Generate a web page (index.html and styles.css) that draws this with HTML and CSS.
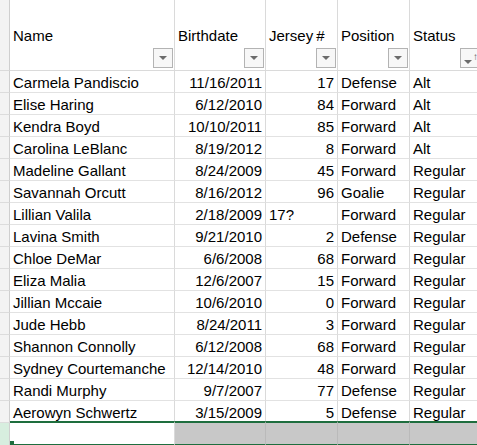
FILE: index.html
```html
<!DOCTYPE html>
<html>
<head>
<meta charset="utf-8">
<link rel="stylesheet" href="styles.css">
</head>
<body>
<div class="sheet">
  <div class="gut hdr"></div>
  <div class="c hdr"><span class="ht">Name</span><span class="fb"><i class="tri"></i></span></div>
  <div class="c hdr"><span class="ht">Birthdate</span><span class="fb"><i class="tri"></i></span></div>
  <div class="c hdr"><span class="ht">Jersey&#8201;#</span><span class="fb"><i class="tri"></i></span></div>
  <div class="c hdr"><span class="ht">Position</span><span class="fb"><i class="tri"></i></span></div>
  <div class="c hdr last"><span class="ht">Status</span><span class="fb sort"><i class="tri"></i><span class="up">↑</span></span></div>

  <div class="gut"></div><div class="c">Carmela Pandiscio</div><div class="c r">11/16/2011</div><div class="c r">17</div><div class="c">Defense</div><div class="c last">Alt</div>
  <div class="gut"></div><div class="c">Elise Haring</div><div class="c r">6/12/2010</div><div class="c r">84</div><div class="c">Forward</div><div class="c last">Alt</div>
  <div class="gut"></div><div class="c">Kendra Boyd</div><div class="c r">10/10/2011</div><div class="c r">85</div><div class="c">Forward</div><div class="c last">Alt</div>
  <div class="gut"></div><div class="c">Carolina LeBlanc</div><div class="c r">8/19/2012</div><div class="c r">8</div><div class="c">Forward</div><div class="c last">Alt</div>
  <div class="gut"></div><div class="c">Madeline Gallant</div><div class="c r">8/24/2009</div><div class="c r">45</div><div class="c">Forward</div><div class="c last">Regular</div>
  <div class="gut"></div><div class="c">Savannah Orcutt</div><div class="c r">8/16/2012</div><div class="c r">96</div><div class="c">Goalie</div><div class="c last">Regular</div>
  <div class="gut"></div><div class="c">Lillian Valila</div><div class="c r">2/18/2009</div><div class="c">17?</div><div class="c">Forward</div><div class="c last">Regular</div>
  <div class="gut"></div><div class="c">Lavina Smith</div><div class="c r">9/21/2010</div><div class="c r">2</div><div class="c">Defense</div><div class="c last">Regular</div>
  <div class="gut"></div><div class="c">Chloe DeMar</div><div class="c r">6/6/2008</div><div class="c r">68</div><div class="c">Forward</div><div class="c last">Regular</div>
  <div class="gut"></div><div class="c">Eliza Malia</div><div class="c r">12/6/2007</div><div class="c r">15</div><div class="c">Forward</div><div class="c last">Regular</div>
  <div class="gut"></div><div class="c">Jillian Mccaie</div><div class="c r">10/6/2010</div><div class="c r">0</div><div class="c">Forward</div><div class="c last">Regular</div>
  <div class="gut"></div><div class="c">Jude Hebb</div><div class="c r">8/24/2011</div><div class="c r">3</div><div class="c">Forward</div><div class="c last">Regular</div>
  <div class="gut"></div><div class="c">Shannon Connolly</div><div class="c r">6/12/2008</div><div class="c r">68</div><div class="c">Forward</div><div class="c last">Regular</div>
  <div class="gut"></div><div class="c">Sydney Courtemanche</div><div class="c r">12/14/2010</div><div class="c r">48</div><div class="c">Forward</div><div class="c last">Regular</div>
  <div class="gut"></div><div class="c">Randi Murphy</div><div class="c r">9/7/2007</div><div class="c r">77</div><div class="c">Defense</div><div class="c last">Regular</div>
  <div class="gut"></div><div class="c">Aerowyn Schwertz</div><div class="c r">3/15/2009</div><div class="c r">5</div><div class="c">Defense</div><div class="c last">Regular</div>

  <div class="gut selg"></div><div class="c sel"></div><div class="c sel gray"></div><div class="c sel gray"></div><div class="c sel gray"></div><div class="c sel gray last"></div>
  <span class="handle"></span>
</div>
</body>
</html>
```
FILE: styles.css
```css
* { box-sizing: border-box; }
html, body { margin: 0; padding: 0; background: #fff; }
body { width: 477px; height: 445px; overflow: hidden; font-family: "Liberation Sans", Arial, sans-serif; font-size: 15px; color: #000; }
.sheet {
  position: relative;
  display: grid;
  grid-template-columns: 10px 165px 91px 72px 72px 80px;
  grid-template-rows: 71px repeat(16, 22px) 23px;
  width: 490px;
}
.gut { background: #f3f3f3; border-right: 1px solid #cfcfcf; border-bottom: 1px solid #dcdcdc; }
.c { border-right: 1px solid #dadada; border-bottom: 1px solid #e2e2e2; padding: 1px 3px 0; line-height: 21px; white-space: nowrap; overflow: hidden; }
.c.r { text-align: right; padding-right: 3px; }
.hdr { position: relative; border-bottom: 1px solid #dadada; }
.c.hdr { overflow: visible; }
.ht { position: absolute; left: 3px; top: 26px; line-height: 20px; }
.fb { position: absolute; right: 1px; top: 48px; width: 20px; height: 20px; border: 1px solid #b3b3b3; background: #f7f7f7; display: flex; align-items: center; justify-content: center; }
.tri { width: 0; height: 0; border-left: 4px solid transparent; border-right: 4px solid transparent; border-top: 4px solid #6b6b6b; }
.fb.sort { right: auto; left: 50px; justify-content: flex-start; padding-left: 3px; gap: 1px; }
.fb.sort .tri { margin-top: 7px; }
.up { font-size: 10px; line-height: 10px; color: #555; margin-top: -3px; }
.sel { border-bottom: 2px solid #1e6e3e; border-top: 2px solid #1e6e3e; margin-top: -2px; height: 25px; }
.gray { background: #c8c8c8; border-right: 1px solid #bababa; }
.selg { background: #d7eedf; border-bottom: none; }
.handle { position: absolute; left: 10px; top: 441px; width: 4px; height: 4px; background: #1e6e3e; }
```
